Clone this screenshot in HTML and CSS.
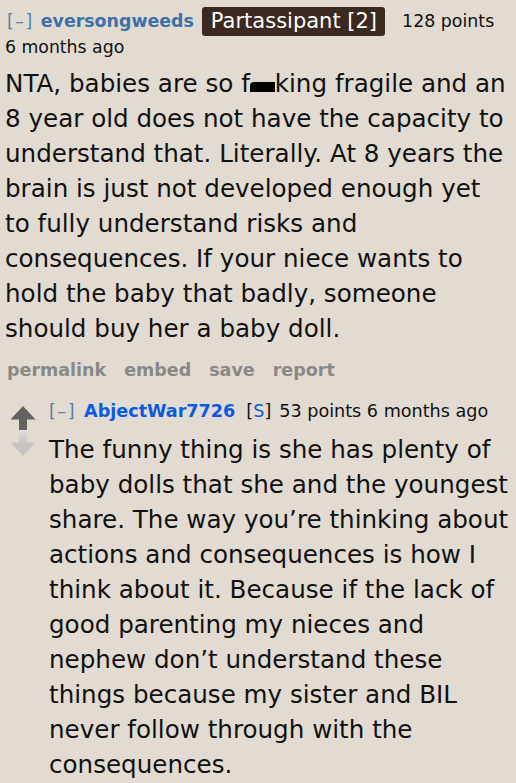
FILE: index.html
```html
<!DOCTYPE html>
<html>
<head>
<meta charset="utf-8">
<link rel="stylesheet" href="styles.css">
</head>
<body>
<div class="comment">
  <div class="tagline">
    <span class="expand">[–]</span>
    <span class="author">eversongweeds</span>
    <span class="flair">Partassipant [2]</span>
    <span class="score">128 points</span>
  </div>
  <div class="time">6 months ago</div>
  <div class="md md1">NTA, babies are so f<span class="censor"></span>king fragile and an<br>8 year old does not have the capacity to<br>understand that. Literally. At 8 years the<br>brain is just not developed enough yet<br>to fully understand risks and<br>consequences. If your niece wants to<br>hold the baby that badly, someone<br>should buy her a baby doll.</div>
  <div class="buttons">
    <span>permalink</span><span>embed</span><span>save</span><span>report</span>
  </div>
  <div class="child">
    <div class="arrows">
      <svg class="arrow" width="26" height="24" viewBox="0 0 26 24"><path d="M13 0 L25.5 13.5 L17 13.5 L17 24 L9 24 L9 13.5 L0.5 13.5 Z" fill="#636363"/></svg>
      <svg class="arrow" width="26" height="24" viewBox="0 0 26 24"><defs><linearGradient id="dg" x1="0" y1="0" x2="0" y2="1"><stop offset="0" stop-color="#dcd8d4"/><stop offset="0.45" stop-color="#c6c4c2"/><stop offset="1" stop-color="#c6c4c2"/></linearGradient></defs><path d="M13 24 L25.5 10.5 L17 10.5 L17 0 L9 0 L9 10.5 L0.5 10.5 Z" fill="url(#dg)"/></svg>
    </div>
    <div class="entry">
      <div class="tagline2">
        <span class="expand">[–]</span>
        <span class="author2">AbjectWar7726</span>
        <span class="sub">[<span class="s">S</span>]</span>
        <span>53 points 6 months ago</span>
      </div>
      <div class="md md2">The funny thing is she has plenty of<br>baby dolls that she and the youngest<br>share. The way you’re thinking about<br>actions and consequences is how I<br>think about it. Because if the lack of<br>good parenting my nieces and<br>nephew don’t understand these<br>things because my sister and BIL<br>never follow through with the<br>consequences.</div>
    </div>
  </div>
</div>
</body>
</html>
```
FILE: styles.css
```css
html, body {
  margin: 0;
  padding: 0;
  background: #e2dbd2;
}
body {
  font-family: "DejaVu Sans", Verdana, sans-serif;
  color: #111;
  overflow: hidden;
}
.comment {
  padding: 6px 0 0 5px;
}
.tagline {
  display: flex;
  align-items: center;
  font-size: 17.4px;
  height: 30px;
  padding-left: 2px;
}
.expand {
  color: #5a7ea8;
  letter-spacing: 1.5px;
  margin-right: 7px;
}
.author {
  color: #3e6fa6;
  font-weight: bold;
  margin-right: 8px;
}
.flair {
  background: #3c2a20;
  color: #fff;
  font-size: 21px;
  line-height: 25px;
  padding: 2px 8px 2px 9px;
  border-radius: 3px;
  margin-right: 17px;
}
.score {
  color: #111;
}
.time {
  font-size: 17.3px;
  line-height: 22px;
}
.md {
  font-size: 24.6px;
  line-height: 35px;
  color: #111;
  white-space: nowrap;
}
.md1 {
  margin-top: 7.5px;
}
.censor {
  display: inline-block;
  width: 25px;
  height: 10px;
  background: #000;
  border-top-left-radius: 4px;
  vertical-align: 0;
}
.buttons {
  display: flex;
  gap: 18px;
  font-size: 17.5px;
  line-height: 20px;
  font-weight: bold;
  color: #8a8886;
  margin-top: 14px;
  padding-left: 2px;
}
.child {
  display: flex;
  margin-top: 21px;
}
.arrows {
  display: flex;
  flex-direction: column;
  gap: 2px;
  padding: 5px 0 0 5px;
  width: 39px;
}
.entry {
  flex: 1;
}
.tagline2 {
  font-size: 17.6px;
  line-height: 20px;
  display: flex;
}
.tagline2 .expand {
  margin-right: 8px;
}
.author2 {
  color: #0a5ae0;
  font-weight: bold;
  margin-right: 11px;
}
.sub {
  margin-right: 8px;
}
.sub .s {
  color: #0a5ae0;
}
.md2 {
  margin-top: 11.5px;
}
```
